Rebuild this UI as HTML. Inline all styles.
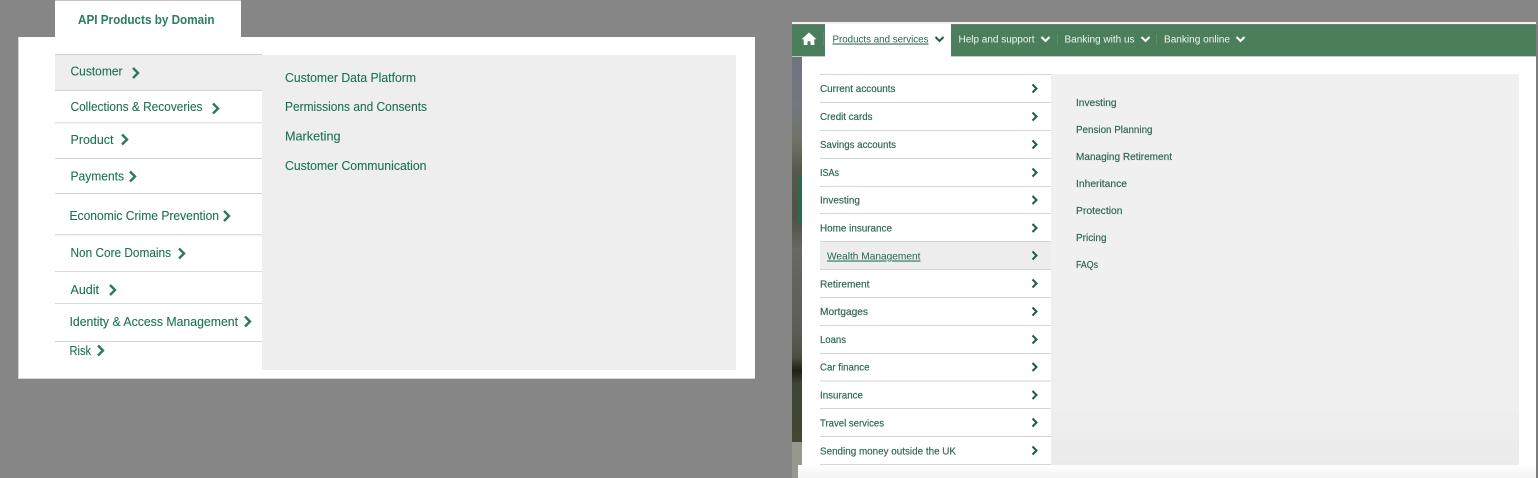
<!DOCTYPE html>
<html lang="en"><head><meta charset="utf-8"><title>API Products by Domain</title>
<style>
html,body{margin:0;padding:0;background:#868686;width:1538px;height:478px;overflow:hidden}
svg{display:block}
text{font-family:"Liberation Sans",sans-serif}
.l{font-size:13px;fill:#1a7058;stroke:#1a7058;stroke-width:.1}
.r{font-size:10.5px;fill:#2f6650;stroke:#2f6650;stroke-width:.18}
.n{font-size:10.5px;fill:#f2f6f3}
.c{fill:none;stroke:#2c7a5c;stroke-width:2.4}
.d{fill:none;stroke:#1f5c45;stroke-width:2}
.w{fill:none;stroke:#fff;stroke-width:2}
</style></head><body>
<svg width="1538" height="478" viewBox="0 0 1538 478" xmlns="http://www.w3.org/2000/svg">
<defs>
<linearGradient id="strip" x1="0" y1="0" x2="0" y2="1">
<stop offset="0" stop-color="#70747f"/><stop offset=".13" stop-color="#74777f"/><stop offset=".22" stop-color="#6f7366"/><stop offset=".3" stop-color="#55584a"/><stop offset=".42" stop-color="#4f5248"/><stop offset=".5" stop-color="#666962"/><stop offset=".72" stop-color="#5a5d55"/><stop offset=".78" stop-color="#4c4f42"/><stop offset=".815" stop-color="#1f211b"/><stop offset=".85" stop-color="#3f4536"/><stop offset="1" stop-color="#41472f"/>
</linearGradient>
<linearGradient id="fade" x1="0" y1="0" x2="0" y2="1"><stop offset="0" stop-color="#fff"/><stop offset="1" stop-color="#f3f3f3"/></linearGradient>
<linearGradient id="pfade" x1="0" y1="0" x2="0" y2="1"><stop offset="0" stop-color="#f0f0f0"/><stop offset=".85" stop-color="#efefef"/><stop offset="1" stop-color="#ebebeb"/></linearGradient>
</defs>
<rect width="1538" height="478" fill="#868686"/>

<!-- Left panel -->
<rect x="18" y="37" width="737" height="342" fill="#d4d4d4"/>
<rect x="19" y="37" width="736" height="341" fill="#fff"/>
<rect x="55" y="1" width="186" height="37" fill="#fff"/>
<rect x="55" y="0" width="186" height="1" fill="#c4c4c4"/>
<text x="78" y="24" font-size="12.5px" font-weight="700" fill="#2b7d5c" textLength="136.500" lengthAdjust="spacingAndGlyphs">API Products by Domain</text>
<rect x="262" y="55" width="474" height="315" fill="#eeeeee"/>
<rect x="55" y="55" width="207" height="35" fill="#eeeeee"/>
<g fill="#d2d2d2">
<rect x="55" y="54" width="207" height="1"/><rect x="55" y="90" width="207" height="1"/>
<rect x="55" y="122" width="207" height="1.5" fill="#e6e6e6"/><rect x="55" y="158" width="207" height="1"/>
<rect x="55" y="193" width="207" height="1"/><rect x="55" y="234" width="207" height="1.3" fill="#dcdcdc"/>
<rect x="55" y="271" width="207" height="1" fill="#dcdcdc"/><rect x="55" y="303" width="207" height="1" fill="#dcdcdc"/>
<rect x="55" y="341" width="207" height="1"/>
</g>
<text class="l" x="70.500" y="75.500" textLength="52" lengthAdjust="spacingAndGlyphs">Customer</text>
<text class="l" x="70.500" y="111" textLength="132" lengthAdjust="spacingAndGlyphs">Collections &amp; Recoveries</text>
<text class="l" x="70.500" y="144" textLength="43" lengthAdjust="spacingAndGlyphs">Product</text>
<text class="l" x="70.500" y="180.500" textLength="53.500" lengthAdjust="spacingAndGlyphs">Payments</text>
<text class="l" x="69.500" y="220" textLength="149.500" lengthAdjust="spacingAndGlyphs">Economic Crime Prevention</text>
<text class="l" x="70.500" y="257" textLength="100.500" lengthAdjust="spacingAndGlyphs">Non Core Domains</text>
<text class="l" x="70.500" y="294" textLength="28.500" lengthAdjust="spacingAndGlyphs">Audit</text>
<text class="l" x="69.500" y="326" textLength="168.500" lengthAdjust="spacingAndGlyphs">Identity &amp; Access Management</text>
<text class="l" x="69.500" y="355" textLength="21.500" lengthAdjust="spacingAndGlyphs">Risk</text>
<path class="c" d="M133 68l5 5-5 5"/>
<path class="c" d="M213 103.500l5 5-5 5"/>
<path class="c" d="M122 134.500l5 5-5 5"/>
<path class="c" d="M130 171.500l5 5-5 5"/>
<path class="c" d="M224 211l5 5-5 5"/>
<path class="c" d="M179 248.500l5 5-5 5"/>
<path class="c" d="M110 285l5 5-5 5"/>
<path class="c" d="M245 316.500l5 5-5 5"/>
<path class="c" d="M98 345.500l5 5-5 5"/>
<text class="l" x="285" y="82" textLength="131" lengthAdjust="spacingAndGlyphs">Customer Data Platform</text>
<text class="l" x="285" y="111" textLength="142" lengthAdjust="spacingAndGlyphs">Permissions and Consents</text>
<text class="l" x="285" y="140.500" textLength="55.500" lengthAdjust="spacingAndGlyphs">Marketing</text>
<text class="l" x="285" y="170" textLength="141.500" lengthAdjust="spacingAndGlyphs">Customer Communication</text>

<!-- Right frame -->
<rect x="792" y="22" width="744" height="2" fill="#f1f1f1"/>
<rect x="792" y="24" width="744" height="1" fill="#777"/>
<rect x="792" y="56" width="10" height="386" fill="url(#strip)"/>
<rect x="798" y="177" width="4" height="47" fill="#2a6a50"/>
<rect x="792" y="442" width="10" height="36" fill="#98978f"/>
<rect x="802" y="56" width="734" height="422" fill="#fff"/>
<rect x="792" y="25" width="744" height="31" fill="#4b7e5b"/>
<rect x="792" y="56" width="744" height="1" fill="#bcd0c2"/>
<rect x="825" y="24" width="126" height="34" fill="#fff"/>
<path d="M809 32.500l-7.500 6.700h2.200v5.800h3.800v-3.700h3v3.700h3.800v-5.800h2.200z" fill="#fff"/>
<rect x="823" y="32" width="1" height="14" fill="#5f8c6d"/>
<rect x="1057" y="34" width="1" height="11" fill="#5f8c6d"/>
<rect x="1156" y="34" width="1" height="11" fill="#5f8c6d"/>
<text x="832.500" y="42.500" font-size="10.500px" fill="#2a6650" textLength="96" lengthAdjust="spacingAndGlyphs" text-decoration="underline">Products and services</text>
<path class="d" d="M935.500 37l4 4 4-4"/>
<text class="n" x="958.500" y="42.500" textLength="76" lengthAdjust="spacingAndGlyphs">Help and support</text>
<path class="w" d="M1041.500 37l4 4 4-4"/>
<text class="n" x="1064.500" y="42.500" textLength="70" lengthAdjust="spacingAndGlyphs">Banking with us</text>
<path class="w" d="M1141.500 37l4 4 4-4"/>
<text class="n" x="1164" y="42.500" textLength="66" lengthAdjust="spacingAndGlyphs">Banking online</text>
<path class="w" d="M1236.500 37l4 4 4-4"/>

<rect x="1051" y="74" width="468" height="391" fill="url(#pfade)"/>
<rect x="820" y="241.500" width="231" height="28" fill="#ededed"/>
<g fill="#d5d5d5">
<rect x="820" y="74" width="231" height="1"/><rect x="820" y="102" width="231" height="1"/><rect x="820" y="130" width="231" height="1"/>
<rect x="820" y="158" width="231" height="1"/><rect x="820" y="186" width="231" height="1"/><rect x="820" y="213" width="231" height="1"/>
<rect x="820" y="241" width="231" height="1"/><rect x="820" y="269" width="231" height="1"/><rect x="820" y="297" width="231" height="1"/>
<rect x="820" y="325" width="231" height="1"/><rect x="820" y="353" width="231" height="1"/><rect x="820" y="380.500" width="231" height="1"/>
<rect x="820" y="408" width="231" height="1"/><rect x="820" y="436" width="231" height="1"/><rect x="820" y="464" width="231" height="1"/>
</g>
<text class="r" x="820" y="92" textLength="75.500" lengthAdjust="spacingAndGlyphs">Current accounts</text>
<text class="r" x="820" y="120" textLength="52.500" lengthAdjust="spacingAndGlyphs">Credit cards</text>
<text class="r" x="820" y="148" textLength="76" lengthAdjust="spacingAndGlyphs">Savings accounts</text>
<text class="r" x="820" y="176" textLength="19" lengthAdjust="spacingAndGlyphs">ISAs</text>
<text class="r" x="820" y="203.500" textLength="40" lengthAdjust="spacingAndGlyphs">Investing</text>
<text class="r" x="820" y="231.500" textLength="72" lengthAdjust="spacingAndGlyphs">Home insurance</text>
<text x="827" y="259.500" font-size="10.500px" fill="#1f6a4f" textLength="93.500" lengthAdjust="spacingAndGlyphs" text-decoration="underline">Wealth Management</text>
<text class="r" x="820" y="287.500" textLength="49.500" lengthAdjust="spacingAndGlyphs">Retirement</text>
<text class="r" x="820" y="315" textLength="48" lengthAdjust="spacingAndGlyphs">Mortgages</text>
<text class="r" x="820" y="343" textLength="26" lengthAdjust="spacingAndGlyphs">Loans</text>
<text class="r" x="820" y="370.500" textLength="49.500" lengthAdjust="spacingAndGlyphs">Car finance</text>
<text class="r" x="820" y="398.500" textLength="43" lengthAdjust="spacingAndGlyphs">Insurance</text>
<text class="r" x="820" y="426.500" textLength="64" lengthAdjust="spacingAndGlyphs">Travel services</text>
<text class="r" x="820" y="454.500" textLength="136" lengthAdjust="spacingAndGlyphs">Sending money outside the UK</text>
<g>
<path class="d" d="M1032.500 84.500l4 4-4 4"/><path class="d" d="M1032.500 112.500l4 4-4 4"/><path class="d" d="M1032.500 140.500l4 4-4 4"/>
<path class="d" d="M1032.500 168.500l4 4-4 4"/><path class="d" d="M1032.500 196l4 4-4 4"/><path class="d" d="M1032.500 224l4 4-4 4"/>
<path class="d" d="M1032.500 251.500l4 4-4 4"/><path class="d" d="M1032.500 279.500l4 4-4 4"/><path class="d" d="M1032.500 307.500l4 4-4 4"/>
<path class="d" d="M1032.500 335.500l4 4-4 4"/><path class="d" d="M1032.500 363l4 4-4 4"/><path class="d" d="M1032.500 391l4 4-4 4"/>
<path class="d" d="M1032.500 418.500l4 4-4 4"/><path class="d" d="M1032.500 446.500l4 4-4 4"/>
</g>
<text class="r" x="1076" y="106" textLength="40.500" lengthAdjust="spacingAndGlyphs">Investing</text>
<text class="r" x="1076" y="133" textLength="76.500" lengthAdjust="spacingAndGlyphs">Pension Planning</text>
<text class="r" x="1076" y="160" textLength="96" lengthAdjust="spacingAndGlyphs">Managing Retirement</text>
<text class="r" x="1076" y="187" textLength="51" lengthAdjust="spacingAndGlyphs">Inheritance</text>
<text class="r" x="1076" y="214" textLength="46.500" lengthAdjust="spacingAndGlyphs">Protection</text>
<text class="r" x="1076" y="241" textLength="30.500" lengthAdjust="spacingAndGlyphs">Pricing</text>
<text class="r" x="1076" y="268" textLength="22" lengthAdjust="spacingAndGlyphs">FAQs</text>
<rect x="798" y="465" width="738" height="13" fill="url(#fade)"/>
<rect x="1536" y="25" width="2" height="453" fill="#7d7d7d"/>
</svg>
</body></html>
